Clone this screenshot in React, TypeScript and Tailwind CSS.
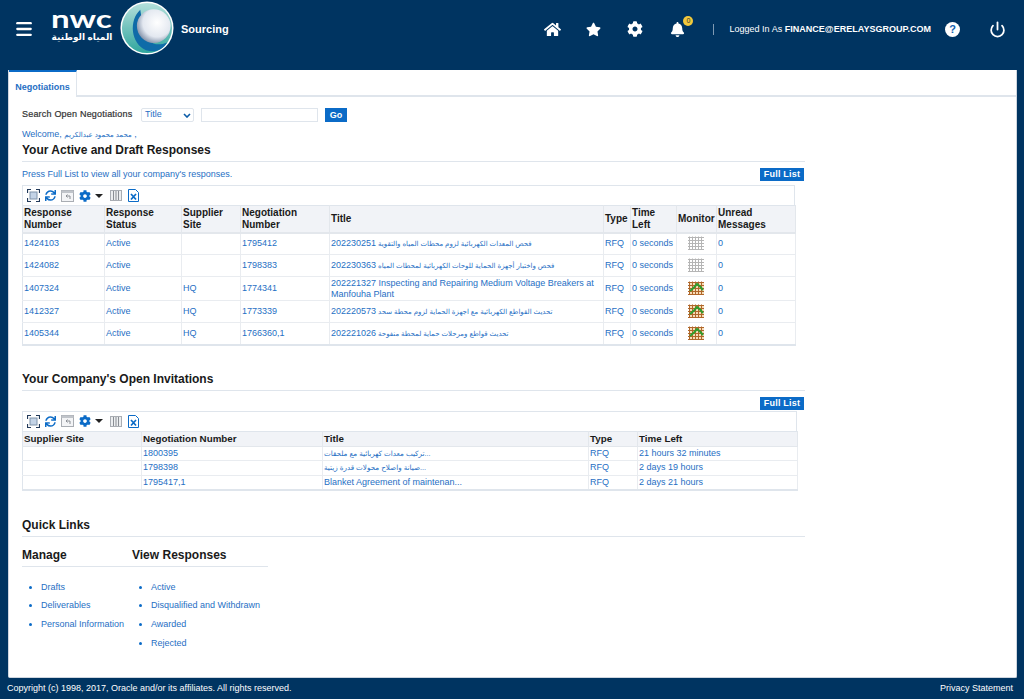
import { FaBell, FaCog, FaHome, FaStar, FaSync } from "react-icons/fa";
import { Menu, Power } from "lucide-react";

const font = { fontFamily: '"Liberation Sans", "DejaVu Sans", sans-serif' };

const responses = [
  { no: "1424103", status: "Active", site: "", neg: "1795412", code: "202230251", title: "فحص المعدات الكهربائية لزوم محطات المياه والتقوية", active: false, h: "h-[22px]" },
  { no: "1424082", status: "Active", site: "", neg: "1798383", code: "202230363", title: "فحص واختبار أجهزة الحماية للوحات الكهربائية لمحطات المياه", active: false, h: "h-[22px]" },
  { no: "1407324", status: "Active", site: "HQ", neg: "1774341", code: "202221327 Inspecting and Repairing Medium Voltage Breakers at Manfouha Plant", title: "", active: true, h: "h-[24px]" },
  { no: "1412327", status: "Active", site: "HQ", neg: "1773339", code: "202220573", title: "تحديث القواطع الكهربائية مع اجهزة الحماية لزوم محطة سحد", active: true, h: "h-[22px]" },
  { no: "1405344", status: "Active", site: "HQ", neg: "1766360,1", code: "202221026", title: "تحديث قواطع ومرحلات حماية لمحطة منفوحة", active: true, h: "h-[22px]" },
];

const invitations = [
  { neg: "1800395", title: "تركيب معدات كهربائية مع ملحقات...", arabic: true, time: "21 hours 32 minutes" },
  { neg: "1798398", title: "صيانة واصلاح محولات قدرة زيتية...", arabic: true, time: "2 days 19 hours" },
  { neg: "1795417,1", title: "Blanket Agreement of maintenan...", arabic: false, time: "2 days 21 hours" },
];

function Logo() {
  return (
    <div className="flex items-center">
      <div className="w-[62px] mr-[7px] text-white text-center">
        <div className="h-[18px] text-left text-[24px] leading-[10px] font-bold origin-left scale-x-[1.38]" style={{ fontFamily: "Lato, sans-serif" }}>nwc</div>
        <div className="text-[9px] leading-[10px] font-bold" dir="rtl">المياه الوطنية</div>
      </div>
      <svg width="54" height="54" viewBox="0 0 56 56">
        <defs>
          <radialGradient id="ball" cx="0.6" cy="0.4" r="0.65">
            <stop offset="0" stopColor="#ffffff" />
            <stop offset="0.65" stopColor="#e3e8f0" />
            <stop offset="1" stopColor="#7f8ea6" />
          </radialGradient>
          <linearGradient id="ring" x1="0" y1="0" x2="0" y2="1">
            <stop offset="0" stopColor="#b5e0dc" />
            <stop offset="1" stopColor="#2fa59d" />
          </linearGradient>
        </defs>
        <circle cx="28" cy="28" r="27.5" fill="#ffffff" />
        <circle cx="28" cy="28" r="26" fill="url(#ring)" />
        <path d="M21 9C9 20 11 44 27 51c9 3 17 0 22-8-12 5-22 0-25-13-1-8-2-15-3-21z" fill="#0f6ba8" />
        <circle cx="35" cy="26" r="17.5" fill="url(#ball)" />
      </svg>
      <span className="ml-[7px] mt-[3px] text-white text-[11px] font-bold">Sourcing</span>
    </div>
  );
}

function TopBar() {
  return (
    <header className="h-[70px] shrink-0 flex items-start pl-[14px] pr-[18px] pt-[1px] text-white">
      <Menu size={20} strokeWidth={2.8} className="mt-[18px] mr-[17px]" />
      <Logo />
      <div className="ml-auto flex items-center h-[56px]">
        <FaHome size={17} />
        <FaStar size={15} className="ml-[25px]" />
        <FaCog size={16} className="ml-[26px]" />
        <div className="relative ml-[27px]">
          <FaBell size={15} />
          <span className="absolute -top-[6px] -right-[8px] w-[10px] h-[10px] rounded-full bg-[#f2c83c] text-[#333] text-[7px] leading-[10px] text-center">0</span>
        </div>
        <span className="ml-[28px] h-[11px] w-px bg-[#7f9ab3]" />
        <span className="ml-[15px] mt-[1px] text-[9px] tracking-[0.02px]">
          Logged In As <span className="font-bold">FINANCE@ERELAYSGROUP.COM</span>
        </span>
        <span className="ml-[14px] w-[15px] h-[15px] rounded-full bg-white text-[#0f5fb0] text-[11px] font-bold leading-[15px] text-center">?</span>
        <Power size={17} strokeWidth={2.5} className="ml-[29px]" />
      </div>
    </header>
  );
}

function Button({ label }: { label: string }) {
  return (
    <span className="inline-block h-[13px] w-[44px] text-center bg-[#0b6bc7] text-white text-[9px] font-bold leading-[13px] tracking-[0.2px]">{label}</span>
  );
}

function SectionTitle({ title }: { title: string }) {
  return (
    <h2 className="w-[783px] h-[19px] border-b border-[#dfe5ec] text-[12px] leading-[15px] font-bold text-[#1a1a1a]">{title}</h2>
  );
}

function Toolbar() {
  return (
    <div className="h-[20px] flex items-center pl-[4px] gap-[5px] border border-[#dfe5ec] border-b-0">
      <svg width="13" height="13" viewBox="0 0 13 13" fill="none">
        <rect x="3" y="3" width="7" height="7" fill="#c3d3e6" stroke="#7f93aa" />
        <path d="M0.5 4V0.5H4M9 0.5h3.5V4M12.5 9v3.5H9M4 12.5H0.5V9" stroke="#223a5a" strokeWidth="1.2" />
      </svg>
      <FaSync size={11} className="text-[#0b6bc7]" />
      <svg width="13" height="12" viewBox="0 0 13 12" fill="none">
        <rect x="0.5" y="0.5" width="12" height="11" fill="#f3f4f6" stroke="#a9adb3" />
        <rect x="0.5" y="0.5" width="12" height="2.5" fill="#c0c4ca" />
        <path d="M9 9V6H5M6.5 4.5L5 6l1.5 1.5" stroke="#8a8e94" />
      </svg>
      <div className="flex items-center gap-[4px]">
        <FaCog size={12} className="text-[#0b6bc7]" />
        <span className="w-0 h-0 border-x-[4px] border-x-transparent border-t-[4px] border-t-[#222]" />
      </div>
      <svg width="12" height="11" viewBox="0 0 12 11" className="ml-[2px]">
        <rect x="0.5" y="0.5" width="11" height="10" fill="#eceef0" stroke="#a9adb3" />
        <path d="M3.5 1v9M6 1v9M8.5 1v9" stroke="#8a8e94" />
      </svg>
      <svg width="11" height="13" viewBox="0 0 11 13" fill="none" className="ml-px">
        <path d="M0.5 0.5H7.5L10.5 3.5V12.5H0.5Z" fill="#ffffff" stroke="#0b6bc7" />
        <path d="M3 5l5 5.5M8 5l-5 5.5" stroke="#0b6bc7" strokeWidth="1.7" />
      </svg>
    </div>
  );
}

function MonitorIcon({ active }: { active: boolean }) {
  const line = active ? "#b0672a" : "#b5b5b5";
  const cells = [1, 4, 7, 10, 13];
  return (
    <svg width="17" height="15" viewBox="0 0 17 15" className="mx-auto">
      {active && <rect x="1" y="1" width="15" height="13" fill="#f6dcb8" />}
      {cells.map((n) => (
        <path key={"v" + n} d={`M${n + 0.5} 0.5V14`} stroke={line} />
      ))}
      {cells.map((n) => (
        <path key={"h" + n} d={`M0 ${n + 0.5}H16`} stroke={line} />
      ))}
      {active && <path d="M2 10L6 6.5L9 3L12 5.5L15 9" fill="none" stroke="#2f9e2f" strokeWidth="2" />}
    </svg>
  );
}

function ResponsesTable() {
  const th = "border-r border-[#e3e7ec] px-[1px] text-left align-middle font-bold text-[#1a1a1a] text-[10px] leading-[12px]";
  const td = "border-r border-[#e9ecf0] px-[1px] align-middle text-[#1f6fc4] leading-[11px]";
  return (
    <div className="w-[773px]">
      <Toolbar />
      <table className="w-full table-fixed border-collapse border border-[#dfe5ec] border-b-2 text-[9px]">
        <colgroup>
          <col className="w-[82px]" />
          <col className="w-[77px]" />
          <col className="w-[59px]" />
          <col className="w-[89px]" />
          <col className="w-[274px]" />
          <col className="w-[27px]" />
          <col className="w-[46px]" />
          <col className="w-[40px]" />
          <col className="w-[79px]" />
        </colgroup>
        <thead>
          <tr className="h-[27px] bg-[#f1f3f7] border-b-2 border-[#e3e7ec]">
            <th className={th}>Response Number</th>
            <th className={th}>Response Status</th>
            <th className={th}>Supplier Site</th>
            <th className={th}>Negotiation Number</th>
            <th className={th}>Title</th>
            <th className={th}>Type</th>
            <th className={th}>Time Left</th>
            <th className={th}>Monitor</th>
            <th className={th}>Unread Messages</th>
          </tr>
        </thead>
        <tbody>
          {responses.map((r) => (
            <tr key={r.no} className={`${r.h} border-b border-[#e9ecf0]`}>
              <td className={td}>{r.no}</td>
              <td className={td}>{r.status}</td>
              <td className={td}>{r.site}</td>
              <td className={td}>{r.neg}</td>
              <td className={td}>
                {r.code}{r.title && <span className="text-[7px] ml-[2px]">{r.title}</span>}
              </td>
              <td className={td}>RFQ</td>
              <td className={td}>0 seconds</td>
              <td className={td}><MonitorIcon active={r.active} /></td>
              <td className={td}>0</td>
            </tr>
          ))}
        </tbody>
      </table>
    </div>
  );
}

function InvitationsTable() {
  const th = "border-r border-[#e3e7ec] px-[1px] text-left align-middle font-bold text-[#1a1a1a] text-[9.8px]";
  const td = "border-r border-[#e9ecf0] px-[1px] align-middle text-[#1f6fc4]";
  return (
    <div className="w-[775px]">
      <Toolbar />
      <table className="w-full table-fixed border-collapse border border-[#dfe5ec] border-b-2 text-[9px] leading-[11px]">
        <colgroup>
          <col className="w-[119px]" />
          <col className="w-[181px]" />
          <col className="w-[266px]" />
          <col className="w-[49px]" />
          <col className="w-[160px]" />
        </colgroup>
        <thead>
          <tr className="h-[15px] bg-[#f1f3f7] border-b border-[#e3e7ec]">
            <th className={th}>Supplier Site</th>
            <th className={th}>Negotiation Number</th>
            <th className={th}>Title</th>
            <th className={th}>Type</th>
            <th className={th}>Time Left</th>
          </tr>
        </thead>
        <tbody>
          {invitations.map((r) => (
            <tr key={r.neg} className="h-[14.5px] border-b border-[#e9ecf0]">
              <td className={td}></td>
              <td className={td}>{r.neg}</td>
              <td className={r.arabic ? `${td} text-[7.2px]` : td}>{r.title}</td>
              <td className={td}>RFQ</td>
              <td className={td}>{r.time}</td>
            </tr>
          ))}
        </tbody>
      </table>
    </div>
  );
}

function LinkList({ items, className }: { items: string[]; className: string }) {
  return (
    <ul className={`list-disc marker:text-[#0b6bc7] pl-[19px] mt-[14px] text-[9px] leading-[12px] text-[#1f6fc4] flex flex-col gap-[6.8px] ${className}`}>
      {items.map((item) => (
        <li key={item}>{item}</li>
      ))}
    </ul>
  );
}

export default function App() {
  return (
    <div style={font} className="h-[699px] w-[1024px] overflow-hidden bg-[#003461] flex flex-col">
      <TopBar />
      <main className="h-[608px] ml-[8px] mr-[7px] bg-white border-x border-b border-[#cfd6df] rounded-b-[2px]">
        <div className="h-[27px] border-b-2 border-[#dfe5ec]">
          <div className="w-[68px] h-[27px] bg-white border-t-2 border-t-[#0b6bc7] border-r border-[#dfe5ec] text-[9px] font-bold text-[#1f6fc4] text-center leading-[30px]">Negotiations</div>
        </div>

        <div className="pl-[13px]">
          <div className="flex items-center h-[14px] mt-[11px] text-[9px]">
            <span className="w-[119px] text-[#333] tracking-[0.2px]" style={{ WebkitTextStroke: "0.2px #333" }}>Search Open Negotiations</span>
            <div className="w-[53px] h-[14px] border border-[#dfe5ec] rounded-[2px] flex items-center justify-between pl-[3px] pr-[2px] text-[#1f6fc4]">
              Title
              <svg width="8" height="5" viewBox="0 0 8 5" fill="none"><path d="M1 1l3 3 3-3" stroke="#0b5ca8" strokeWidth="1.6" /></svg>
            </div>
            <div className="w-[117px] h-[14px] ml-[7px] border border-[#dfe5ec]" />
            <span className="ml-[7px] w-[22px] text-center bg-[#0b6bc7] h-[14px] text-white font-bold leading-[14px]">Go</span>
          </div>

          <p className="mt-[6px] text-[9px] leading-[12px] text-[#1f6fc4]">Welcome, <span className="text-[7px]">محمد محمود عبدالكريم</span> ,</p>

          <div className="mt-[2px]"><SectionTitle title="Your Active and Draft Responses" /></div>

          <div className="w-[782px] flex items-center justify-between h-[13px] mt-[6px] mb-[4px] text-[9px] text-[#1f6fc4]">
            Press Full List to view all your company's responses.
            <Button label="Full List" />
          </div>
          <ResponsesTable />

          <div className="mt-[26px]"><SectionTitle title="Your Company's Open Invitations" /></div>
          <div className="w-[782px] flex justify-end h-[13px] mt-[6px] mb-[1px]">
            <Button label="Full List" />
          </div>
          <InvitationsTable />

          <div className="mt-[27px]"><SectionTitle title="Quick Links" /></div>
          <div className="w-[246px] h-[19px] mt-[11px] border-b border-[#dfe5ec] flex text-[12px] leading-[15px] font-bold text-[#1a1a1a]">
            <span className="w-[110px]">Manage</span>
            <span>View Responses</span>
          </div>
          <div className="flex">
            <LinkList className="w-[110px]" items={["Drafts", "Deliverables", "Personal Information"]} />
            <LinkList className="" items={["Active", "Disqualified and Withdrawn", "Awarded", "Rejected"]} />
          </div>
        </div>
      </main>
      <footer className="flex-1 flex items-center justify-between pl-[7px] pr-[11px] text-[9px] text-white">
        <span>Copyright (c) 1998, 2017, Oracle and/or its affiliates. All rights reserved.</span>
        <span>Privacy Statement</span>
      </footer>
    </div>
  );
}
